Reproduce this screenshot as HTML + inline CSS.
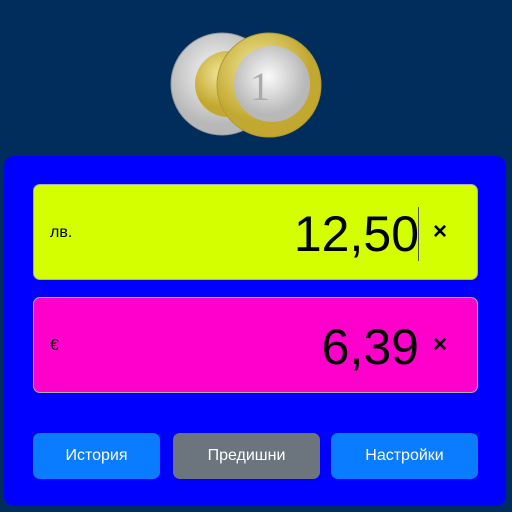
<!DOCTYPE html><html style="overflow:hidden;height:512px"><head><style>
body{margin:0;width:512px;height:512px;background:#002d5c;position:relative;overflow:hidden;font-family:"Liberation Sans",sans-serif}
.p{position:absolute;left:4px;top:156px;width:502px;height:350px;background:#0000fe;border-radius:10px}
.f{position:absolute;left:33px;width:445px;height:96px;border-radius:7px;box-sizing:border-box;border:1px solid #aab}
.l{position:absolute;left:16px;top:39px;font-size:16px}
.v{position:absolute;right:58px;top:20px;font-size:50px}
.x{position:absolute;right:30px;top:33px;font-size:24px;font-weight:bold}
.b{position:absolute;top:433px;height:46px;border-radius:7px;color:#fff;font-size:16px;display:flex;align-items:center;justify-content:center}
</style></head><body>
<svg width="512" height="160" style="position:absolute;left:0;top:0">
<defs><radialGradient id="s" cx="45%" cy="40%"><stop offset="0" stop-color="#fafafa"/><stop offset="1" stop-color="#b8b8b8"/></radialGradient>
<radialGradient id="g" cx="40%" cy="35%"><stop offset="0" stop-color="#f3e89a"/><stop offset="1" stop-color="#c2a830"/></radialGradient></defs>
<circle cx="222" cy="84" r="51" fill="url(#s)" stroke="#999"/>
<circle cx="228" cy="84" r="33" fill="url(#g)"/>
<circle cx="269" cy="85" r="52" fill="url(#g)" stroke="#b09a30"/>
<circle cx="272" cy="84" r="38" fill="url(#s)"/>
<text x="250" y="100" font-size="40" fill="#aaa" font-family="Liberation Serif">1</text>
</svg>
<div class="p"></div>
<div class="f" style="top:184px;background:#d4ff00"><span class="l">лв.</span><span class="v">12,50</span><span style="position:absolute;right:58px;top:22px;width:1px;height:54px;background:#555"></span><span class="x">×</span></div>
<div class="f" style="top:297px;background:#ff00cc"><span class="l">€</span><span class="v">6,39</span><span class="x">×</span></div>
<div class="b" style="left:33px;width:127px;background:#0a7cff">История</div>
<div class="b" style="left:173px;width:147px;background:#6c757d">Предишни</div>
<div class="b" style="left:331px;width:147px;background:#0a7cff">Настройки</div>
</body></html>
